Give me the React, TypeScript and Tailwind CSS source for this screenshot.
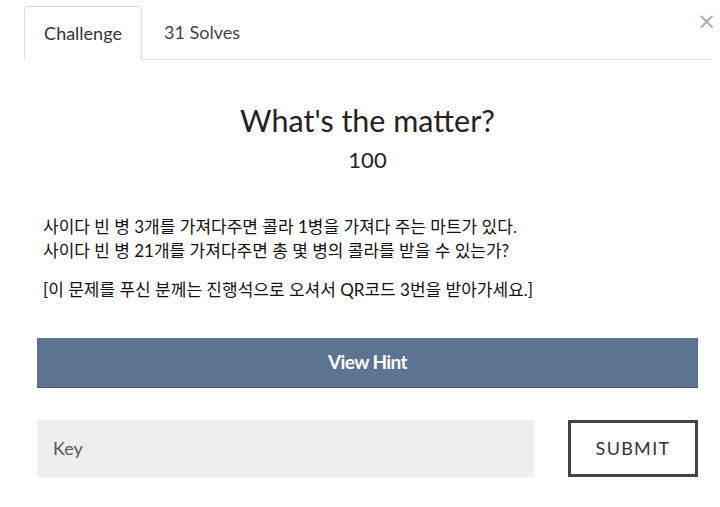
const App = () => {
  return (
    <div className="w-[720px] h-[507px] bg-white font-['Lato','Noto_Sans_CJK_KR',sans-serif] text-[#222] overflow-hidden">
      {/* Tabs */}
      <div className="flex items-start pt-[6px] pl-[24px] pr-[8px]">
        <div className="flex flex-1 border-b border-[#dddddd] h-[54px]">
          <div className="w-[118px] h-[54px] -mb-px bg-white border border-[#dddddd] border-b-white rounded-t-[4px] flex items-center justify-center text-[18px] text-[#333]">
            Challenge
          </div>
          <div className="px-[22px] h-[53px] flex items-center text-[18px] text-[#444]">
            31 Solves
          </div>
        </div>
        <button className="absolute left-[697px] top-[10px] text-[#aaa] text-[23px] leading-none font-['DejaVu_Sans',sans-serif]">
          ×
        </button>
      </div>

      {/* Body */}
      <div className="px-[37px] pr-[22px]">
        <h2 className="text-center text-[30.5px] leading-[36px] mt-[42px] text-[#222]">What's the matter?</h2>
        <p className="text-center text-[22px] leading-[28px] mt-[8px]">100</p>

        <div className="mt-[41px] pl-[6px] text-[17px] text-[#111]">
          <p className="leading-[24px]">사이다 빈 병 3개를 가져다주면 콜라 1병을 가져다 주는 마트가 있다.</p>
          <p className="leading-[24px]">사이다 빈 병 21개를 가져다주면 총 몇 병의 콜라를 받을 수 있는가?</p>
          <p className="leading-[24px] mt-[15px]">[이 문제를 푸신 분께는 진행석으로 오셔서 QR코드 3번을 받아가세요.]</p>
        </div>

        <button className="mt-[36px] w-[661px] h-[50px] bg-[#5c7391] border-b border-[#46556a] text-white font-bold text-[19px] tracking-[-0.6px]">
          View Hint
        </button>

        <div className="flex mt-[32px] gap-[34px]">
          <div className="w-[497px] h-[57px] bg-[#eeeeee] flex items-center pl-[16px] text-[18px] text-[#555]">
            Key
          </div>
          <button className="w-[130px] h-[57px] border-[3px] border-[#444] bg-white text-[18px] tracking-[1.3px] text-[#333]">
            SUBMIT
          </button>
        </div>
      </div>
    </div>
  );
};

export default App;
